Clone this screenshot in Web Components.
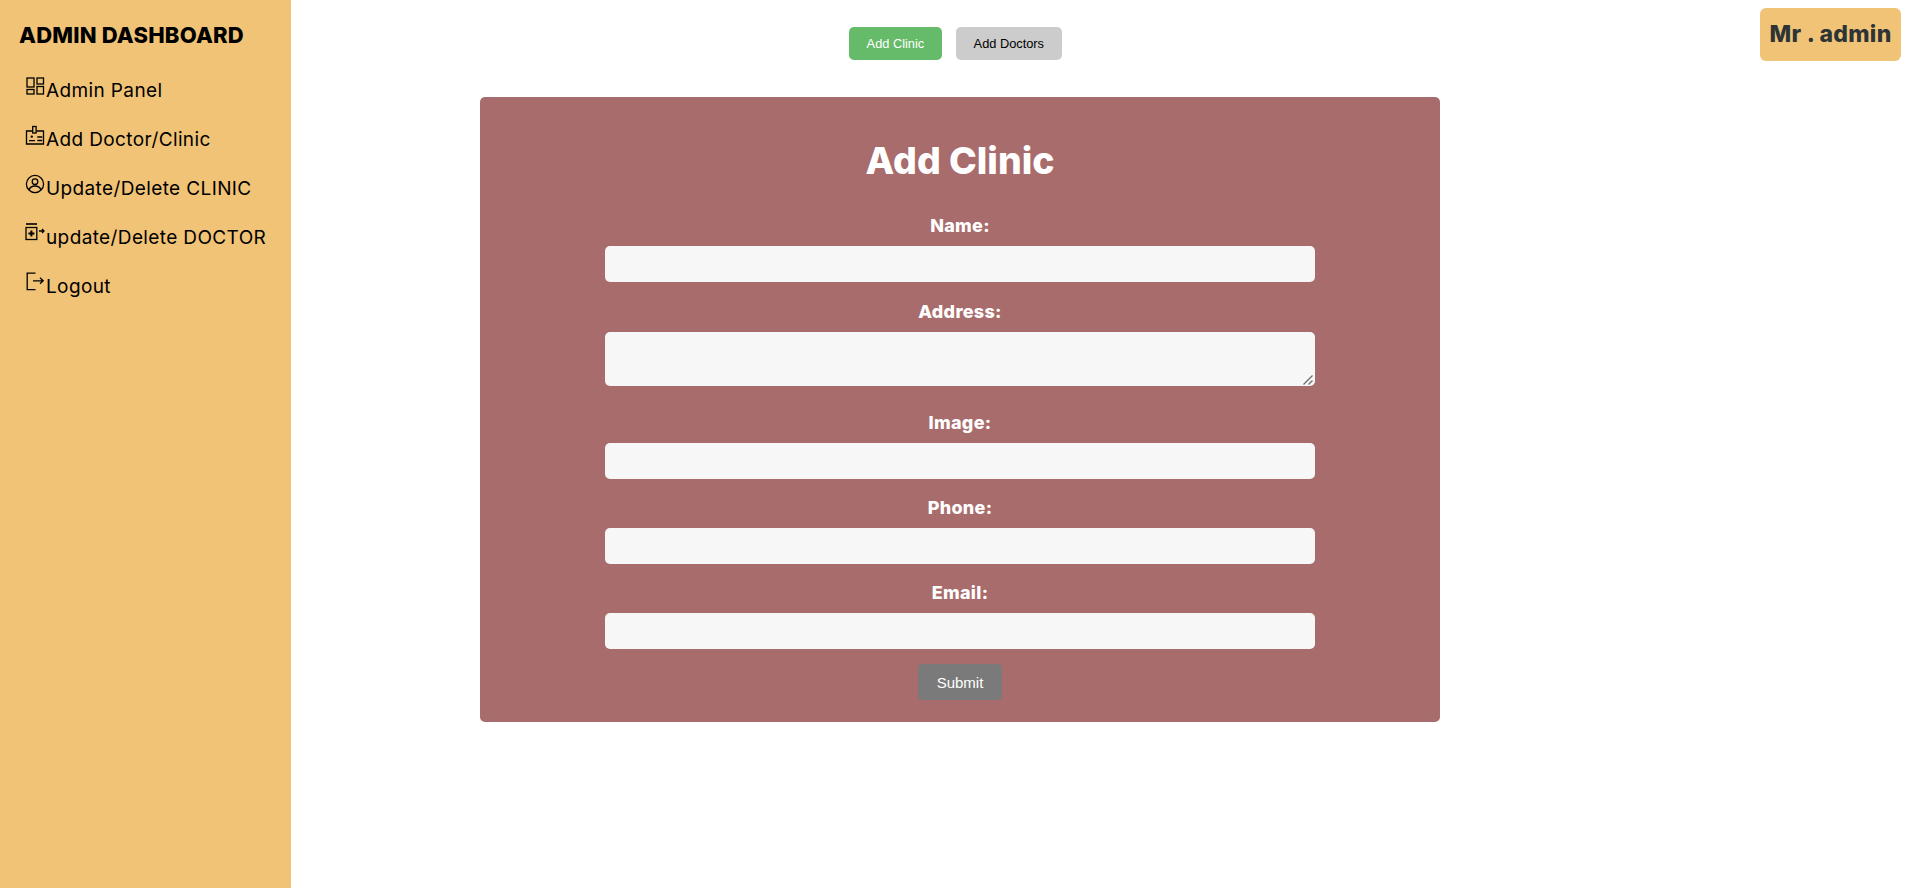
<!DOCTYPE html>
<html lang="en">
<head>
<meta charset="utf-8">
<title>Admin Dashboard</title>
<style>
html,body{margin:0;padding:0;background:#fff;font-family:"Inter","Liberation Sans",sans-serif;}
</style>
</head>
<body>
<admin-app>
  <admin-sidebar slot="side" heading="ADMIN DASHBOARD">
    <nav-item icon="grid">Admin Panel</nav-item>
    <nav-item icon="badge">Add Doctor/Clinic</nav-item>
    <nav-item icon="user">Update/Delete CLINIC</nav-item>
    <nav-item icon="med">update/Delete DOCTOR</nav-item>
    <nav-item icon="logout">Logout</nav-item>
  </admin-sidebar>
  <top-bar>
    <tab-button active>Add Clinic</tab-button>
    <tab-button>Add Doctors</tab-button>
    <user-badge slot="user">Mr . admin</user-badge>
  </top-bar>
  <clinic-form heading="Add Clinic">
    <form-field label="Name:" gap="17"></form-field>
    <form-field label="Address:" type="textarea" gap="24"></form-field>
    <form-field label="Image:" gap="16"></form-field>
    <form-field label="Phone:" gap="16"></form-field>
    <form-field label="Email:" gap="15"></form-field>
  </clinic-form>
</admin-app>
<script>
const ICONS = {
  grid:'<rect x="2" y="2" width="7" height="9"/><rect x="12" y="2" width="6.5" height="6"/><rect x="2" y="13.5" width="7" height="4.5"/><rect x="12" y="10.5" width="6.5" height="7.5"/>',
  badge:'<path d="M7.7 6H1.5v13h17V6h-7.2"/><rect x="7.7" y="1.5" width="3.4" height="6.5"/><circle cx="6.8" cy="11.6" r="1.2" fill="currentColor" stroke="none"/><path d="M4 15.7h6M12.3 12h5M12.3 15.5h5"/>',
  user:'<circle cx="10" cy="10" r="8.6"/><circle cx="10" cy="7.7" r="2.8"/><path d="M4 15.8c1.2-2.8 3.6-3.8 6-3.8s4.8 1 6 3.8"/>',
  med:'<path d="M1 1h11" stroke-width="1.6"/><rect x="1" y="4.5" width="10.8" height="12"/><path d="M6.4 7.4v6M3.4 10.4h6" stroke-width="2"/><path d="M14 8h5M17 6l2 2-2 2"/>',
  logout:'<path d="M10.5 1.2H2.2v16.4h8.3"/><path d="M8 8.8h10.2M15 5.8l3.2 3-3.2 3"/>'
};
const GRIP = "data:image/svg+xml," + encodeURIComponent('<svg xmlns="http://www.w3.org/2000/svg" width="15" height="15"><path d="M3.5 13.5l9-9M8.5 13.5l4-4" stroke="#6f6f6f" stroke-width="1.4" fill="none"/></svg>');

class AdminApp extends HTMLElement{
  constructor(){super();this.attachShadow({mode:'open'}).innerHTML=`
  <style>
    :host{display:grid;grid-template-columns:291px 1fr;min-height:888px;color:#000;}
    main{display:flex;flex-direction:column;min-width:0;}
  </style>
  <slot name="side"></slot>
  <main><slot></slot></main>`;}
}
class AdminSidebar extends HTMLElement{
  constructor(){super();this.attachShadow({mode:'open'}).innerHTML=`
  <style>
    :host{display:block;background:#f1c376;height:888px;box-sizing:border-box;padding:20px 0 0 19px;}
    h2{margin:0 0 26px;font:800 22px/30px "Inter","Liberation Sans",sans-serif;letter-spacing:.2px;color:#000;white-space:nowrap;}
    nav{display:flex;flex-direction:column;margin-left:1px;}
  </style>
  <h2></h2>
  <nav><slot></slot></nav>`;
  this.shadowRoot.querySelector('h2').textContent=this.getAttribute('heading');}
}
class NavItem extends HTMLElement{
  constructor(){super();this.attachShadow({mode:'open'}).innerHTML=`
  <style>
    :host{display:flex;align-items:flex-start;height:49px;padding-left:5px;gap:1px;color:#000;
      font:400 19px/30px "Inter","Liberation Sans",sans-serif;letter-spacing:.38px;white-space:nowrap;}
    svg{width:20px;height:20px;flex:none;fill:none;stroke:currentColor;stroke-width:1.3;}
  </style>
  <svg viewBox="0 0 20 20" aria-hidden="true">${ICONS[this.getAttribute('icon')]}</svg>
  <span><slot></slot></span>`;}
}
class TopBar extends HTMLElement{
  constructor(){super();this.attachShadow({mode:'open'}).innerHTML=`
  <style>
    :host{display:flex;justify-content:space-between;align-items:flex-start;box-sizing:border-box;height:97px;padding:8px 19px 0 558px;}
    .tabs{display:flex;gap:14.2px;margin-top:19px;}
  </style>
  <div class="tabs"><slot></slot></div>
  <slot name="user"></slot>`;}
}
class TabButton extends HTMLElement{
  constructor(){super();this.attachShadow({mode:'open'}).innerHTML=`
  <style>
    :host{display:block;}
    button{display:block;height:33px;padding:0 17.6px;border:0;border-radius:5px;background:#ccc;color:#000;font:400 12.8px "Liberation Sans",Arial,sans-serif;}
    :host([active]) button{background:#66bb6a;color:#fff;}
  </style>
  <button type="button"><slot></slot></button>`;}
}
class UserBadge extends HTMLElement{
  constructor(){super();this.attachShadow({mode:'open'}).innerHTML=`
  <style>
    :host{display:flex;align-items:center;justify-content:center;box-sizing:border-box;width:141px;height:53px;background:#f1c376;border-radius:6px;color:#2d3436;
      font:800 23px/1 "Inter","Liberation Sans",sans-serif;letter-spacing:.3px;white-space:nowrap;}
  </style>
  <slot></slot>`;}
}
class ClinicForm extends HTMLElement{
  constructor(){super();this.attachShadow({mode:'open'}).innerHTML=`
  <style>
    :host{display:block;box-sizing:border-box;width:960px;height:625px;margin-left:189px;background:#a96c6c;border-radius:5px;padding:34px 125px 0;color:#fff;}
    h1{margin:0 0 23px;font:800 37.4px/59px "Inter","Liberation Sans",sans-serif;text-align:center;color:#fff;}
    form{display:flex;flex-direction:column;align-items:stretch;}
    button{align-self:center;width:84px;height:36px;border:0;border-radius:4px;background:#7a7a7a;color:#fff;font:400 15px "Liberation Sans",Arial,sans-serif;}
  </style>
  <h1></h1>
  <form onsubmit="return false"><slot></slot><button type="submit">Submit</button></form>`;
  this.shadowRoot.querySelector('h1').textContent=this.getAttribute('heading');}
}
class FormField extends HTMLElement{
  constructor(){super();
    const ta=this.getAttribute('type')==='textarea';
    this.attachShadow({mode:'open'}).innerHTML=`
  <style>
    :host{display:flex;flex-direction:column;margin-bottom:${this.getAttribute('gap')}px;}
    label{display:block;height:24px;margin-bottom:9px;font:800 18px/25px "Inter","Liberation Sans",sans-serif;letter-spacing:.3px;text-align:center;color:#fff;}
    input,textarea{display:block;box-sizing:border-box;width:100%;margin:0;border:0;border-radius:5px;background:#f7f7f7;outline:0;font:13.3px "Liberation Sans",Arial,sans-serif;}
    input{height:36px;}
    textarea{height:54px;resize:vertical;}
    textarea::-webkit-resizer{background:url("${GRIP}") no-repeat 0 0;}
  </style>
  <label for="f"></label>
  ${ta?'<textarea id="f"></textarea>':'<input id="f" type="text">'}`;
  this.shadowRoot.querySelector('label').textContent=this.getAttribute('label');}
}
customElements.define('admin-app',AdminApp);
customElements.define('admin-sidebar',AdminSidebar);
customElements.define('nav-item',NavItem);
customElements.define('top-bar',TopBar);
customElements.define('tab-button',TabButton);
customElements.define('user-badge',UserBadge);
customElements.define('clinic-form',ClinicForm);
customElements.define('form-field',FormField);
</script>
</body>
</html>
